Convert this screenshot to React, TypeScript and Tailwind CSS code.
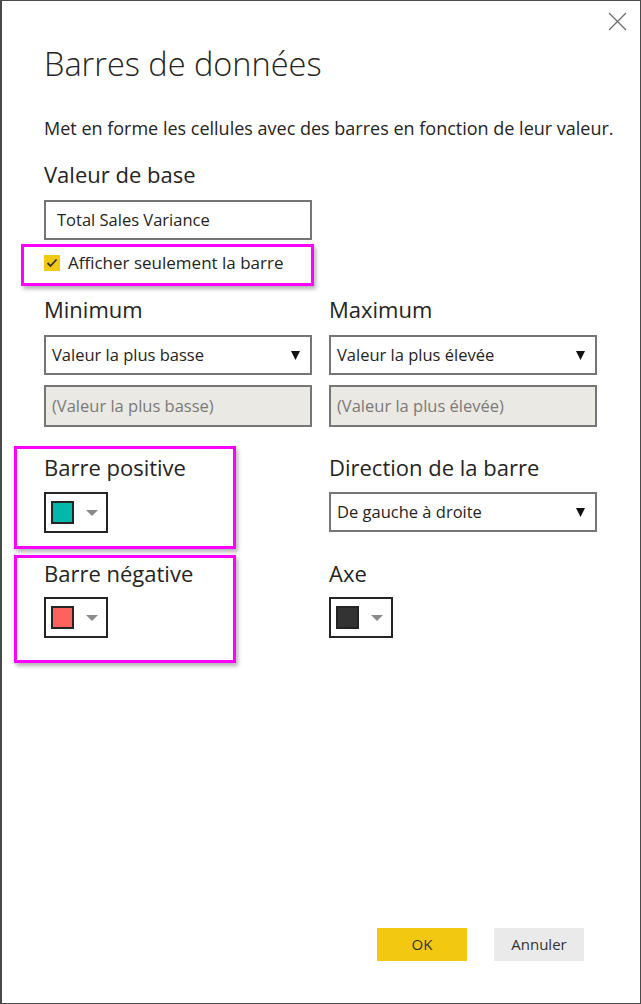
import React from "react";

const font = { fontFamily: '"Open Sans", "Noto Sans", sans-serif' };

const Arrow = () => (
  <svg width="9" height="10" viewBox="0 0 9 10" className="shrink-0">
    <polygon points="0,1 9,1 4.5,10" fill="#111" />
  </svg>
);

const Select = ({ value }: { value: string }) => (
  <div className="flex h-[40px] items-center justify-between border-2 border-[#767676] bg-white pl-[6px] pr-[10px] text-[16.5px] text-[#252423]">
    <span>{value}</span>
    <Arrow />
  </div>
);

const Disabled = ({ value }: { value: string }) => (
  <div className="flex h-[42px] items-center border-2 border-[#767676] bg-[#eae9e3] pl-[6px] text-[16.5px] text-[#7a7a7a]">
    {value}
  </div>
);

const Swatch = ({ color }: { color: string }) => (
  <div className="flex h-[41px] w-[64px] items-center gap-[12px] border-2 border-[#252423] bg-white pl-[5px]">
    <div className="h-[23px] w-[23px] border-2 border-[#252423]" style={{ backgroundColor: color }} />
    <svg width="12" height="6" viewBox="0 0 12 6">
      <polygon points="0,0 12,0 6,6" fill="#8a8a8a" />
    </svg>
  </div>
);

const Label = ({ children, className = "" }: { children: React.ReactNode; className?: string }) => (
  <div className={`h-[28px] text-[22px] leading-[28px] text-[#252423] ${className}`}>{children}</div>
);

export default function App() {
  return (
    <div
      style={font}
      className="relative flex h-[1004px] w-[641px] flex-col border border-l-2 border-[#4a4a4a] bg-white px-[42px]"
    >
      {/* close */}
      <button className="absolute right-[13px] top-[11px] p-0">
        <svg width="19" height="19" viewBox="0 0 19 19">
          <path d="M1 1 L18 18 M18 1 L1 18" stroke="#6b6b6b" strokeWidth="1.2" />
        </svg>
      </button>

      <h1 className="mt-[41px] h-[44px] text-[32.5px] font-light leading-[44px] text-[#252423]">
        Barres de données
      </h1>
      <p className="-mr-[40px] mt-[30px] h-[24px] whitespace-nowrap text-[18px] leading-[24px] text-[#252423]">
        Met en forme les cellules avec des barres en fonction de leur valeur.
      </p>

      <Label className="mt-[20px]">Valeur de base</Label>
      <div className="mt-[12px] flex h-[40px] w-[268px] items-center border-2 border-[#767676] pl-[11px] text-[16.5px] text-[#252423]">
        Total Sales Variance
      </div>
      <label className="mt-[11px] flex h-[24px] items-center gap-[8px] text-[17px] text-[#252423]">
        <span className="flex h-[16px] w-[16px] items-center justify-center bg-[#f2c811]">
          <svg width="12" height="10" viewBox="0 0 12 10">
            <path d="M1.5 5 L4.5 8 L10.5 1.5" stroke="#333" strokeWidth="1.8" fill="none" />
          </svg>
        </span>
        Afficher seulement la barre
      </label>

      <div className="mt-[20px] grid grid-cols-[268px_268px] gap-x-[17px]">
        <div>
          <Label>Minimum</Label>
          <div className="mt-[12px]">
            <Select value="Valeur la plus basse" />
          </div>
          <div className="mt-[10px]">
            <Disabled value="(Valeur la plus basse)" />
          </div>
        </div>
        <div>
          <Label>Maximum</Label>
          <div className="mt-[12px]">
            <Select value="Valeur la plus élevée" />
          </div>
          <div className="mt-[10px]">
            <Disabled value="(Valeur la plus élevée)" />
          </div>
        </div>

        <div className="mt-[26px]">
          <Label>Barre positive</Label>
          <div className="mt-[11px]">
            <Swatch color="#01b8aa" />
          </div>
        </div>
        <div className="mt-[26px]">
          <Label>Direction de la barre</Label>
          <div className="mt-[11px]">
            <Select value="De gauche à droite" />
          </div>
        </div>

        <div className="mt-[26px]">
          <Label>Barre négative</Label>
          <div className="mt-[10px]">
            <Swatch color="#fd625e" />
          </div>
        </div>
        <div className="mt-[26px]">
          <Label>Axe</Label>
          <div className="mt-[10px]">
            <Swatch color="#333333" />
          </div>
        </div>
      </div>

      <div className="mt-auto mb-[42px] flex justify-end gap-[27px] pr-[14px]">
        <button className="h-[33px] w-[90px] bg-[#f2c811] text-[15px] text-[#333]">OK</button>
        <button className="h-[33px] w-[90px] bg-[#eaeaea] text-[15px] text-[#333]">Annuler</button>
      </div>

      {/* annotation highlights */}
      <div className="pointer-events-none absolute left-[19px] top-[243px] h-[42px] w-[293px] border-[3px] border-[#ff00ff] shadow-[2px_3px_4px_rgba(0,0,0,0.3)]" />
      <div className="pointer-events-none absolute left-[12px] top-[445px] h-[103px] w-[222px] border-[3px] border-[#ff00ff] shadow-[2px_3px_4px_rgba(0,0,0,0.3)]" />
      <div className="pointer-events-none absolute left-[12px] top-[554px] h-[108px] w-[222px] border-[3px] border-[#ff00ff] shadow-[2px_3px_4px_rgba(0,0,0,0.3)]" />
    </div>
  );
}
